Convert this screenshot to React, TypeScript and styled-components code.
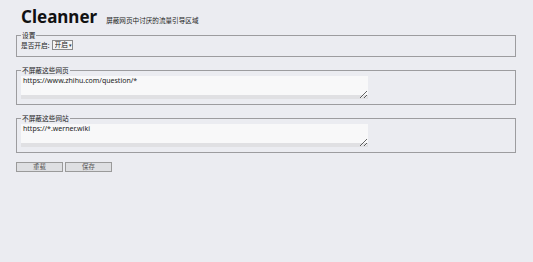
import React from "react";
import styled, { createGlobalStyle } from "styled-components";

const Global = createGlobalStyle`
  html, body { margin: 0; padding: 0; background: #ebecf1; }
  body {
    font-family: "Noto Sans", "Noto Sans CJK SC", sans-serif;
    color: #222;
    -webkit-text-size-adjust: none;
  }
`;

const Page = styled.div`
  padding: 5px 17px 0 16px;
  width: 500px;
`;

const Header = styled.header`
  display: flex;
  align-items: baseline;
  gap: 9px;
  padding-left: 5px;
  height: 26px;
`;

const Title = styled.h1`
  margin: 0;
  font-size: 17px;
  font-weight: 700;
  line-height: 24px;
  color: #111;
`;

const Subtitle = styled.span`
  font-size: 6.6px;
  color: #222;
`;

const Group = styled.fieldset<{ $pb: number }>`
  margin: 0 0 9px 0;
  padding: 0 4px ${(p) => p.$pb}px 4px;
  border: 1px solid #9c9c9f;
  min-width: 0;
`;

const Legend = styled.legend`
  font-size: 6.7px;
  line-height: 9px;
  padding: 0 1px;
  margin-left: 0;
  color: #222;
`;

const Row = styled.div`
  display: flex;
  align-items: center;
  gap: 2px;
  font-size: 6.7px;
  line-height: 9px;
`;

const SelectWrap = styled.span`
  position: relative;
  display: inline-block;
`;

const Select = styled.select`
  appearance: none;
  -webkit-appearance: none;
  font-family: inherit;
  font-size: 6.7px;
  width: 21px;
  height: 10px;
  padding: 0 0 0 2px;
  margin: 0;
  border: 1px solid #8a8a8a;
  border-radius: 0;
  background: #f4f4f4;
  color: #222;
  line-height: 8px;
  outline: none;
`;

const Arrow = styled.span`
  position: absolute;
  right: 1px;
  top: 1px;
  font-size: 5px;
  line-height: 8px;
  pointer-events: none;
  color: #333;
`;

const Area = styled.textarea`
  display: block;
  box-sizing: border-box;
  width: 347px;
  height: 23px;
  margin: 1px 0 0 0;
  padding: 0 2px;
  border: none;
  font-family: inherit;
  font-size: 7px;
  line-height: 9px;
  color: #222;
  background: linear-gradient(to bottom, #f8f8f9 0, #f8f8f9 19px, #e0e0e3 19px, #e0e0e3 23px);
  resize: both;
  outline: none;
  overflow: hidden;
`;

const Buttons = styled.div`
  display: flex;
  gap: 2px;
  margin-top: 0;
`;

const Button = styled.button`
  width: 47px;
  height: 10px;
  padding: 0;
  border: 1px solid #9a9a9a;
  background: #dedfe2;
  font-family: inherit;
  font-size: 6.4px;
  line-height: 8px;
  color: #555;
  border-radius: 0;
`;

export default function App() {
  return (
    <>
      <Global />
      <Page>
        <Header>
          <Title>Cleanner</Title>
          <Subtitle>屏蔽网页中讨厌的流量引导区域</Subtitle>
        </Header>
        <Group $pb={6}>
          <Legend>设置</Legend>
          <Row>
            <span>是否开启:</span>
            <SelectWrap>
              <Select defaultValue="on">
                <option value="on">开启</option>
                <option value="off">关闭</option>
              </Select>
              <Arrow>▾</Arrow>
            </SelectWrap>
          </Row>
        </Group>
        <Group $pb={5}>
          <Legend>不屏蔽这些网页</Legend>
          <Area defaultValue="https://www.zhihu.com/question/*" />
        </Group>
        <Group $pb={5}>
          <Legend>不屏蔽这些网站</Legend>
          <Area defaultValue="https://*.werner.wiki" />
        </Group>
        <Buttons>
          <Button>重载</Button>
          <Button>保存</Button>
        </Buttons>
      </Page>
    </>
  );
}
